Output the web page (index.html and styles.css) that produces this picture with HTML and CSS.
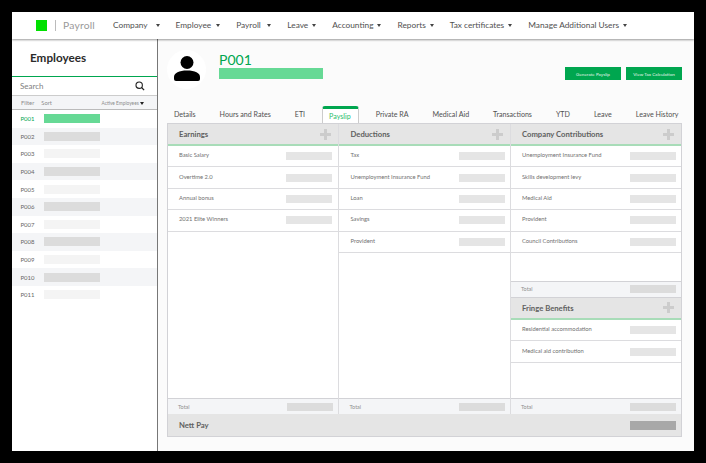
FILE: index.html
```html
<!DOCTYPE html>
<html lang="en">
<head>
<meta charset="utf-8">
<title>Payroll</title>
<link rel="stylesheet" href="styles.css">
</head>
<body>
<div class="app">
  <header class="topbar">
    <span class="logo"></span>
    <span class="brand">Payroll</span>
    <nav class="nav">
      <span class="nav-item">Company <i class="caret"></i></span>
      <span class="nav-item">Employee <i class="caret"></i></span>
      <span class="nav-item">Payroll <i class="caret"></i></span>
      <span class="nav-item">Leave <i class="caret"></i></span>
      <span class="nav-item">Accounting <i class="caret"></i></span>
      <span class="nav-item">Reports <i class="caret"></i></span>
      <span class="nav-item">Tax certificates <i class="caret"></i></span>
      <span class="nav-item">Manage Additional Users <i class="caret"></i></span>
    </nav>
  </header>
  <div class="body">
    <aside class="sidebar">
      <h1 class="side-title">Employees</h1>
      <div class="search">
        <span>Search</span>
        <svg width="10" height="10" viewBox="0 0 11 11"><circle cx="4.6" cy="4.6" r="3.5" fill="none" stroke="#222" stroke-width="1.2"/><path d="M7.2 7.2 10 10" stroke="#222" stroke-width="1.4"/></svg>
      </div>
      <div class="filter"><span>Filter</span><span>Sort</span><span class="active-emp">Active Employees <i class="caret dark"></i></span></div>
      <div class="list">
        <div class="emp sel"><span>P001</span><b class="bar green"></b></div>
        <div class="emp alt"><span>P002</span><b class="bar dark-bar"></b></div>
        <div class="emp"><span>P003</span><b class="bar light"></b></div>
        <div class="emp alt"><span>P004</span><b class="bar dark-bar"></b></div>
        <div class="emp"><span>P005</span><b class="bar light"></b></div>
        <div class="emp alt"><span>P006</span><b class="bar dark-bar"></b></div>
        <div class="emp"><span>P007</span><b class="bar light"></b></div>
        <div class="emp alt"><span>P008</span><b class="bar dark-bar"></b></div>
        <div class="emp"><span>P009</span><b class="bar light"></b></div>
        <div class="emp alt"><span>P010</span><b class="bar dark-bar"></b></div>
        <div class="emp"><span>P011</span><b class="bar light"></b></div>
      </div>
    </aside>
    <main class="main">
      <section class="profile">
        <div class="avatar">
          <svg width="26" height="25" viewBox="0 0 26 25"><circle cx="13" cy="6.5" r="6.5" fill="#000"/><path d="M0 23v-2c0-4 5-6.500 13-6.500s13 2.500 13 6.500v2q0 2-2 2H2q-2 0-2-2z" fill="#000"/></svg>
        </div>
        <div class="who">
          <div class="code">P001</div>
          <div class="name-bar"></div>
        </div>
        <div class="actions">
          <span class="btn">Generate Payslip</span>
          <span class="btn">View Tax Calculation</span>
        </div>
      </section>
      <div class="tabs">
        <span class="tab">Details</span>
        <span class="tab">Hours and Rates</span>
        <span class="tab">ETI</span>
        <span class="tab on">Payslip</span>
        <span class="tab">Private RA</span>
        <span class="tab">Medical Aid</span>
        <span class="tab">Transactions</span>
        <span class="tab">YTD</span>
        <span class="tab">Leave</span>
        <span class="tab">Leave History</span>
      </div>
      <section class="sheet">
        <div class="cols">
          <div class="col">
            <div class="head"><span>Earnings</span><svg class="plus" width="11" height="11" viewBox="0 0 11 11"><path d="M4 0h3v4h4v3H7v4H4V7H0V4h4z" fill="#ccc"/></svg></div>
            <div class="row"><span>Basic Salary</span><b class="cell"></b></div>
            <div class="row"><span>Overtime 2.0</span><b class="cell"></b></div>
            <div class="row"><span>Annual bonus</span><b class="cell"></b></div>
            <div class="row"><span>2021 Elite Winners</span><b class="cell"></b></div>
            <div class="fill"></div>
            <div class="total"><span>Total</span><b class="cell"></b></div>
          </div>
          <div class="col">
            <div class="head"><span>Deductions</span><svg class="plus" width="11" height="11" viewBox="0 0 11 11"><path d="M4 0h3v4h4v3H7v4H4V7H0V4h4z" fill="#ccc"/></svg></div>
            <div class="row"><span>Tax</span><b class="cell"></b></div>
            <div class="row"><span>Unemployment Insurance Fund</span><b class="cell"></b></div>
            <div class="row"><span>Loan</span><b class="cell"></b></div>
            <div class="row"><span>Savings</span><b class="cell"></b></div>
            <div class="row"><span>Provident</span><b class="cell"></b></div>
            <div class="fill"></div>
            <div class="total"><span>Total</span><b class="cell"></b></div>
          </div>
          <div class="col">
            <div class="head"><span>Company Contributions</span><svg class="plus" width="11" height="11" viewBox="0 0 11 11"><path d="M4 0h3v4h4v3H7v4H4V7H0V4h4z" fill="#ccc"/></svg></div>
            <div class="row"><span>Unemployment Insurance Fund</span><b class="cell"></b></div>
            <div class="row"><span>Skills development levy</span><b class="cell"></b></div>
            <div class="row"><span>Medical Aid</span><b class="cell"></b></div>
            <div class="row"><span>Provident</span><b class="cell"></b></div>
            <div class="row"><span>Council Contributions</span><b class="cell"></b></div>
            <div class="spacer"></div>
            <div class="total"><span>Total</span><b class="cell"></b></div>
            <div class="head fringe"><span>Fringe Benefits</span><svg class="plus" width="11" height="11" viewBox="0 0 11 11"><path d="M4 0h3v4h4v3H7v4H4V7H0V4h4z" fill="#ccc"/></svg></div>
            <div class="row"><span>Residential accommodation</span><b class="cell"></b></div>
            <div class="row"><span>Medical aid contribution</span><b class="cell"></b></div>
            <div class="fill"></div>
            <div class="total"><span>Total</span><b class="cell"></b></div>
          </div>
        </div>
        <div class="nett"><span>Nett Pay</span><b class="nett-val"></b></div>
      </section>
    </main>
  </div>
</div>
</body>
</html>
```
FILE: styles.css
```css
* { box-sizing: border-box; }
html, body { margin: 0; height: 100%; }
body { background: #000; padding: 12px; font-family: Lato, "Open Sans", sans-serif; color: #555; overflow: hidden; }
.app { width: 682px; height: 439px; background: #fff; display: flex; flex-direction: column; }
.topbar { height: 27px; flex: none; background: #fff; display: flex; align-items: center; padding-left: 24px; box-shadow: 0 1px 2px rgba(0,0,0,.4); position: relative; }
.logo { width: 11px; height: 11px; background: #00e000; }
.brand { margin-left: 8px; border-left: 1px solid #bbb; padding-left: 7px; font-size: 10.3px; line-height: 11px; color: #999; letter-spacing: .2px; width: 58px; }
.nav { display: flex; gap: 16px; font-size: 8.3px; color: #505050; padding-bottom: 1px; }
.nav-item { white-space: nowrap; display: flex; align-items: center; gap: 4px; }
.nav-item:nth-child(1) { gap: 8px; }
.nav-item:nth-child(2) { gap: 5px; }
.nav-item:nth-child(3) { gap: 6.5px; }
.caret { display: inline-block; width: 0; height: 0; border-left: 2px solid transparent; border-right: 2px solid transparent; border-top: 3px solid #444; }
.caret.dark { border-top-color: #222; }
.active-emp .caret { border-left-width: 2.5px; border-right-width: 2.5px; }
.body { flex: 1; display: flex; min-height: 0; }
.sidebar { width: 146px; flex: none; background: #fff; border-right: 1px solid #777; display: flex; flex-direction: column; }
.side-title { margin: 0; height: 38px; padding: 11px 0 0 18px; font-size: 11.7px; line-height: 14px; font-weight: 700; color: #2a2a2a; border-bottom: 1px solid #00a64f; }
.search { height: 19px; border-bottom: 1px solid #ccc; display: flex; align-items: center; justify-content: space-between; padding: 0 12px 0 8px; font-size: 8px; color: #808080; }
.filter { height: 14px; background: #f4f5f7; border-bottom: 1px solid #bbb; display: flex; align-items: center; gap: 7px; padding: 0 13px 0 9px; font-size: 5.8px; color: #8c8c8c; }
.active-emp { margin-left: auto; font-size: 4.8px; }
.list { display: flex; flex-direction: column; }
.emp { height: 17.6px; display: flex; align-items: center; gap: 9px; padding-left: 8.5px; font-size: 6px; color: #666; }
.emp.alt { background: #f4f5f7; }
.emp.sel { color: #00a64f; }
.emp span { width: 14.5px; }
.bar { width: 56px; height: 9px; }
.bar.green { background: #66d995; }
.bar.dark-bar { background: #dcdcdc; }
.bar.light { background: #f4f4f4; }
.main { flex: 1; background: #fbfbfb; padding: 0 12px 14px 9px; display: flex; flex-direction: column; min-width: 0; }
.profile { height: 67px; flex: none; display: flex; padding-top: 11px; }
.avatar { width: 39px; height: 39px; border-radius: 50%; background: #fff; display: flex; align-items: center; justify-content: center; flex: none; padding-bottom: 3px; }
.who { margin-left: 13px; padding-top: 1px; }
.code { font-size: 14px; line-height: 17px; color: #00a64f; }
.name-bar { width: 104px; height: 11px; background: #66d995; }
.actions { margin-left: auto; display: flex; gap: 5px; padding-top: 17px; height: 30px; }
.btn { width: 56px; height: 13px; background: #00a64f; color: #e0f5e8; font-size: 4.6px; display: flex; align-items: center; justify-content: center; white-space: nowrap; }
.tabs { height: 17px; flex: none; display: flex; gap: 10px; font-size: 7.1px; color: #505050; }
.tab { padding: 0 7px; display: flex; align-items: center; white-space: nowrap; }
.tab.on { color: #2ac06c; background: #fff; border: 1px solid #ccc; border-top: 3px solid #00a64f; border-bottom: 0; border-radius: 3px 3px 0 0; padding: 0 7px 0 6px; }
.sheet { flex: 1; display: flex; flex-direction: column; border: 1px solid #d2d2d6; min-height: 0; background: #fff; }
.cols { flex: 1; display: grid; grid-template-columns: 170.5px 172.5px 1fr; min-height: 0; }
.col { display: flex; flex-direction: column; border-right: 1px solid #dcdcdf; min-width: 0; }
.col:last-child { border-right: 0; }
.head { height: 22px; flex: none; background: #e5e5e5; border-bottom: 2px solid #a8dcb8; display: flex; align-items: center; justify-content: space-between; padding: 0 7px 0 11px; font-size: 7.7px; font-weight: 700; color: #606060; }
.head.fringe { height: 23px; border-top: 1px solid #d2d2d6; }
.row { height: 21.4px; flex: none; border-bottom: 1px solid #dcdcdf; display: flex; align-items: center; justify-content: space-between; padding: 0 5px 0 11px; font-size: 5.8px; color: #707070; }
.row span { margin-bottom: 3px; }
.col:first-child .row { padding-right: 6px; }
.col:nth-child(2) .row, .col:nth-child(2) .head { padding-left: 12px; }
.col:nth-child(2) .total { padding-left: 11px; }
.cell { width: 46px; height: 8px; background: #e5e5e5; }
.fill { flex: 1; }
.spacer { height: 28px; flex: none; }
.total { height: 16px; flex: none; background: #f4f5f7; border-top: 1px solid #d2d2d6; display: flex; align-items: center; justify-content: space-between; padding: 0 5px 0 10px; font-size: 5.5px; color: #909090; }
.total .cell { background: #dcdcdc; }
.nett { height: 22px; flex: none; background: #e5e5e5; display: flex; align-items: center; justify-content: space-between; padding: 0 5px 0 11px; font-size: 7.7px; font-weight: 700; color: #606060; }
.nett-val { width: 46px; height: 9px; background: #a8a8a8; }
```
